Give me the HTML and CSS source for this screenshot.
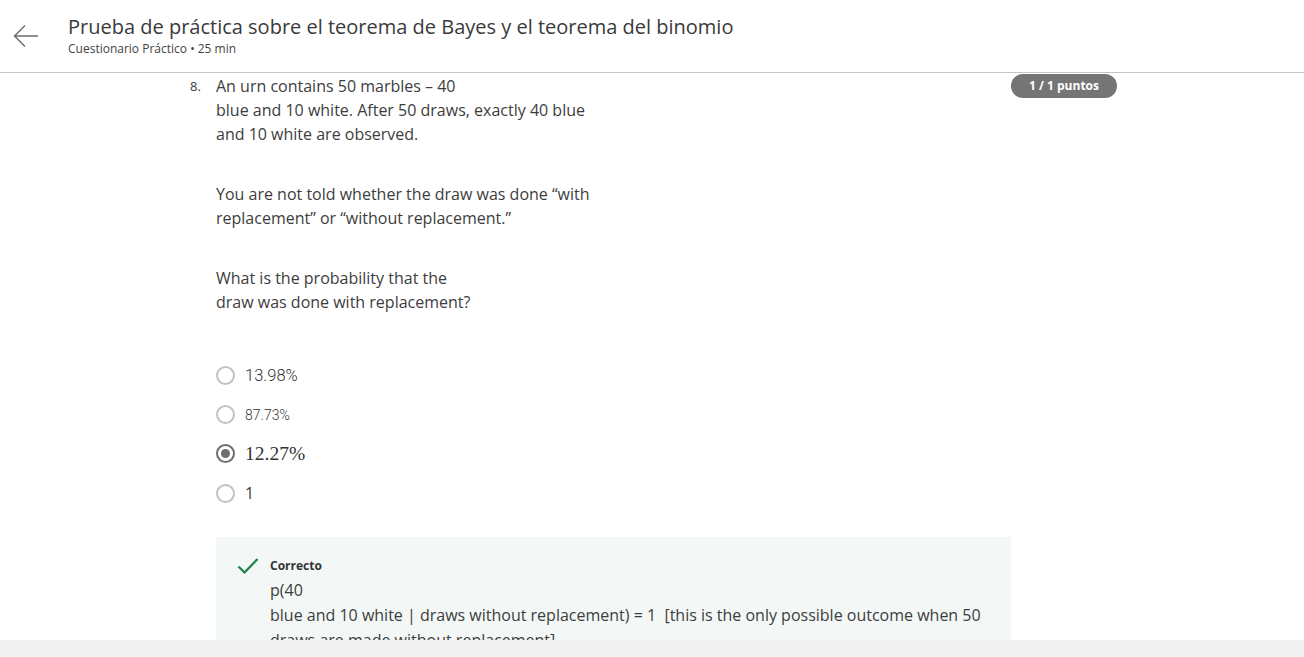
FILE: index.html
```html
<!DOCTYPE html>
<html lang="es">
<head>
<meta charset="utf-8">
<title>Prueba de práctica</title>
<link rel="stylesheet" href="styles.css">
</head>
<body>
<div class="page">
  <header class="header">
    <button class="back" aria-label="Volver">
      <svg width="26" height="24" viewBox="0 0 26 24"><path d="M25 12H2M12 1.5L1.5 12L12 22.5" fill="none" stroke="#6b6b6b" stroke-width="1.4"/></svg>
    </button>
    <div class="titles">
      <h1 class="title">Prueba de práctica sobre el teorema de Bayes y el teorema del binomio</h1>
      <div class="subtitle">Cuestionario Práctico • 25 min</div>
    </div>
  </header>
  <main class="scroll">
    <div class="question">
      <div class="qnum">8.</div>
      <div class="qbody">
        <p class="para">An urn contains 50 marbles – 40<br>blue and 10 white. After 50 draws, exactly 40 blue<br>and 10 white are observed.</p>
        <p class="para">You are not told whether the draw was done “with<br>replacement” or “without replacement.”</p>
        <p class="para">What is the probability that the<br>draw was done with replacement?</p>
        <div class="options">
          <div class="option"><span class="radio"></span><span class="opt opt-a">13.98%</span></div>
          <div class="option"><span class="radio"></span><span class="opt opt-b">87.73%</span></div>
          <div class="option"><span class="radio checked"></span><span class="opt opt-c">12.27%</span></div>
          <div class="option"><span class="radio"></span><span class="opt opt-d">1</span></div>
        </div>
        <div class="feedback">
          <svg class="check" width="22" height="18" viewBox="0 0 22 18"><path d="M1.5 9.5L7.5 15.5L20.5 2" fill="none" stroke="#1f7f50" stroke-width="2.2"/></svg>
          <div class="fb-body">
            <div class="fb-title">Correcto</div>
            <div class="fb-text">p(40<br>blue and 10 white | draws without replacement) = 1&nbsp; [this is the only possible outcome when 50 draws are made without replacement]</div>
          </div>
        </div>
      </div>
      <div class="badge">1 / 1 puntos</div>
    </div>
  </main>
  <footer class="bottombar"></footer>
</div>
</body>
</html>
```
FILE: styles.css
```css
* { box-sizing: border-box; }
html, body { margin: 0; padding: 0; }
body {
  font-family: "Open Sans", "Liberation Sans", sans-serif;
  color: #3d3d3d;
  background: #fff;
}
.page {
  width: 1304px;
  height: 657px;
  display: flex;
  flex-direction: column;
  overflow: hidden;
}
.header {
  height: 73px;
  flex: none;
  border-bottom: 1px solid #c4c4c4;
  display: flex;
  align-items: flex-start;
}
.back {
  border: 0;
  background: none;
  padding: 0;
  margin: 24px 0 0 13px;
  width: 26px;
  height: 24px;
  cursor: pointer;
}
.back svg { display: block; }
.titles {
  margin: 13px 0 0 29px;
}
.title {
  margin: 0;
  font-size: 20px;
  font-weight: 400;
  line-height: 28px;
  color: #3a3a3a;
}
.subtitle {
  font-size: 12px;
  line-height: 16px;
  margin-top: 0;
  color: #444;
}
.scroll {
  flex: 1;
  overflow: hidden;
  min-height: 0;
}
.question {
  display: flex;
  align-items: flex-start;
  padding: 1px 0 0 190px;
}
.qnum {
  width: 26px;
  flex: none;
  font-size: 13px;
  line-height: 24px;
}
.qbody {
  width: 795px;
  flex: none;
}
.badge {
  flex: none;
  width: 106px;
  height: 24px;
  margin-top: 0;
  border-radius: 12px;
  background: #757575;
  color: #fff;
  font-size: 12px;
  font-weight: 700;
  line-height: 24px;
  text-align: center;
}
.para {
  margin: 0 0 36px;
  font-size: 16px;
  line-height: 24px;
}
.para:nth-of-type(3) { margin-bottom: 42px; }
.options {
  display: flex;
  flex-direction: column;
}
.option {
  height: 39px;
  display: flex;
  align-items: center;
}
.option:last-child { height: 40px; }
.radio {
  width: 19px;
  height: 19px;
  border: 2px solid #c2c2c2;
  border-radius: 50%;
  flex: none;
  margin-right: 10px;
  display: flex;
  align-items: center;
  justify-content: center;
}
.radio.checked { border-color: #6e6e6e; }
.radio.checked::after {
  content: "";
  width: 9px;
  height: 9px;
  border-radius: 50%;
  background: #6e6e6e;
}
.opt-a { font-family: Roboto, "Liberation Sans", sans-serif; font-size: 16.5px; font-weight: 300; color: #333; }
.opt-b { font-family: Roboto, "Liberation Sans", sans-serif; font-size: 14px; font-weight: 300; color: #333; }
.opt-c { font-family: "Liberation Serif", "DejaVu Serif", serif; font-size: 19.5px; color: #333; }
.opt-d { font-size: 16px; }
.feedback {
  margin-top: 24px;
  background: #f3f8f6;
  padding: 19px 20px 20px 21px;
  display: flex;
  align-items: flex-start;
}
.check { flex: none; margin-top: 1px; margin-right: 11px; display: block; }
.fb-title {
  font-size: 12px;
  font-weight: 700;
  line-height: 20px;
  color: #333;
}
.fb-text {
  font-size: 16px;
  line-height: 25px;
  margin-top: 2px;
}
.bottombar {
  height: 17px;
  flex: none;
  background: #f0f0f0;
}
```
